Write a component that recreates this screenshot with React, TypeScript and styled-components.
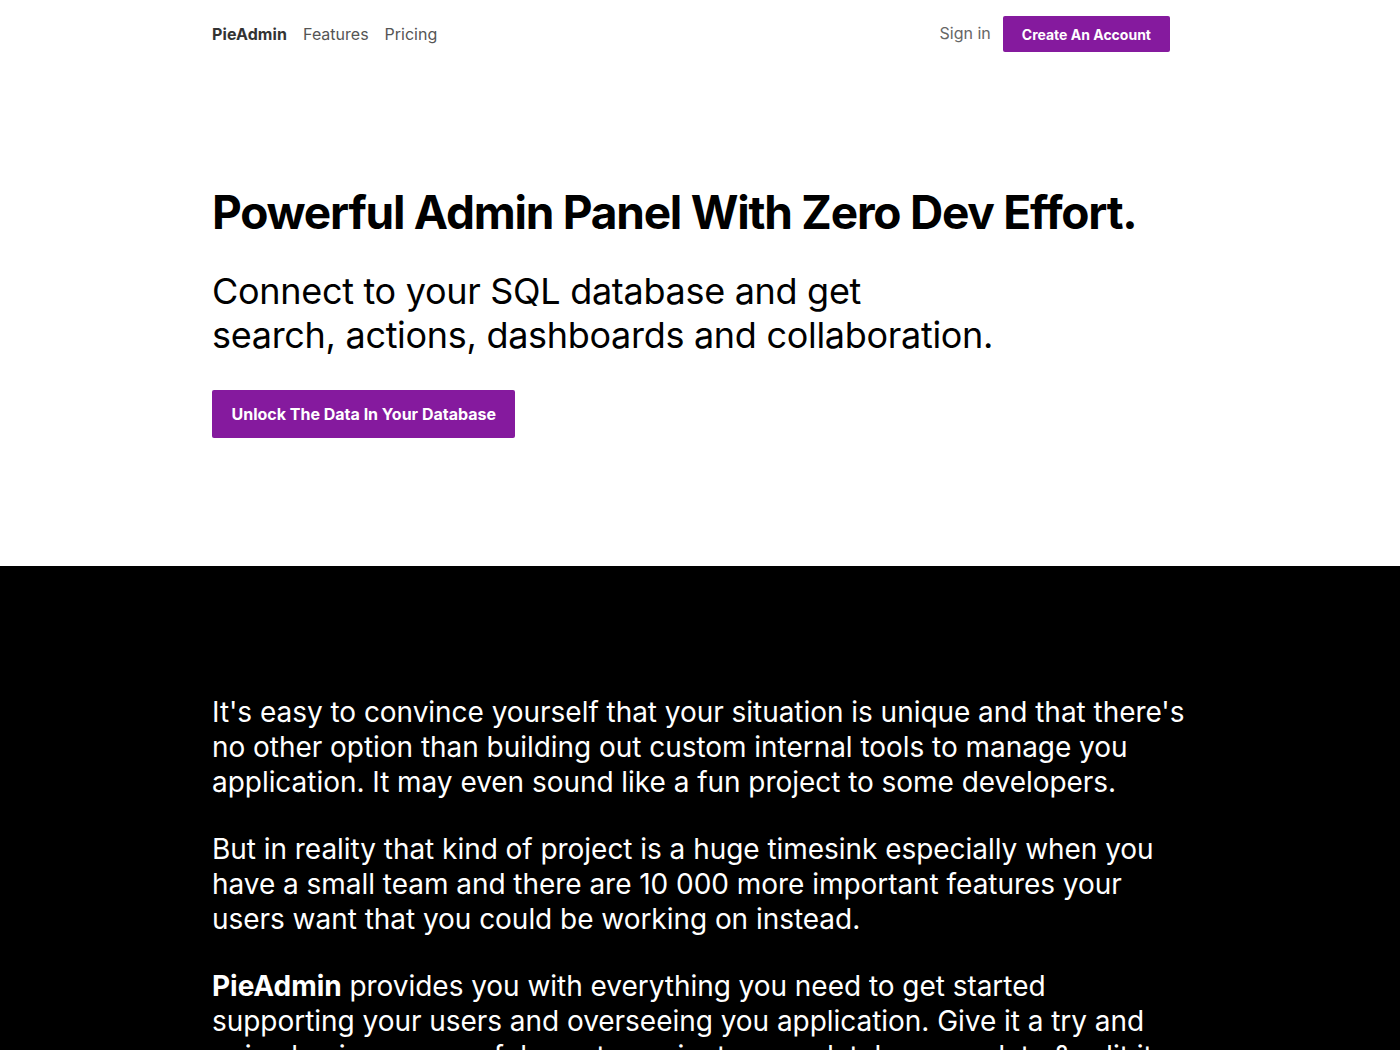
import styled, { createGlobalStyle } from "styled-components";

const GlobalStyle = createGlobalStyle`
  * { box-sizing: border-box; }
  body {
    margin: 0;
    font-family: Inter, "Noto Sans", sans-serif;
    background: #ffffff;
    color: #000000;
  }
`;

const PURPLE = "#851a9e";

export default function App() {
  return (
    <>
      <GlobalStyle />
      <Container>
        <Nav>
          <NavLeft>
            <Brand>PieAdmin</Brand>
            <NavLink>Features</NavLink>
            <NavLink>Pricing</NavLink>
          </NavLeft>
          <NavRight>
            <SignIn>Sign in</SignIn>
            <SmallButton>Create An Account</SmallButton>
          </NavRight>
        </Nav>
        <Hero>
          <Headline>Powerful Admin Panel With Zero Dev Effort.</Headline>
          <Subline>
            Connect to your SQL database and get
            <br />
            search, actions, dashboards and collaboration.
          </Subline>
          <BigButton>Unlock The Data In Your Database</BigButton>
        </Hero>
      </Container>
      <Dark>
        <Container>
          <Para>
            It's easy to convince yourself that your situation is unique and
            that there's no other option than building out custom internal
            tools to manage you application. It may even sound like a fun
            project to some developers.
          </Para>
          <Para>
            But in reality that kind of project is a huge timesink especially
            when you have a small team and there are 10 000 more important
            features your users want that you could be working on instead.
          </Para>
          <Para>
            <strong>PieAdmin</strong> provides you with everything you need to
            get started supporting your users and overseeing you application.
            Give it a try and enjoy having a powerful way to navigate your
            database, update &amp; edit it.
          </Para>
        </Container>
      </Dark>
    </>
  );
}

const Container = styled.div`
  width: 976px;
  margin: 0 auto;
`;

const Nav = styled.nav`
  height: 68px;
  display: flex;
  align-items: center;
  justify-content: space-between;
  padding-right: 18px;
`;

const NavLeft = styled.div`
  display: flex;
  align-items: center;
  gap: 16px;
`;

const Brand = styled.span`
  font-size: 16px;
  font-weight: 700;
  color: #333333;
  letter-spacing: 0.1px;
`;

const NavLink = styled.a`
  font-size: 16px;
  color: #555555;
  text-decoration: none;
`;

const NavRight = styled.div`
  display: flex;
  align-items: center;
  gap: 12px;
`;

const SignIn = styled.a`
  font-size: 16px;
  color: #666666;
  margin-top: -2px;
`;

const SmallButton = styled.button`
  height: 36px;
  padding: 0 19px;
  border: none;
  border-radius: 2px;
  background: ${PURPLE};
  color: #ffffff;
  font-family: Inter, sans-serif;
  font-size: 14px;
  font-weight: 700;
`;

const Hero = styled.section`
  padding: 116px 0 128px;
`;

const Headline = styled.h1`
  margin: 0;
  font-size: 46px;
  line-height: 56px;
  font-weight: 700;
  letter-spacing: -1.22px;
`;

const Subline = styled.p`
  margin: 29px 0 0;
  font-size: 36px;
  line-height: 44px;
  font-weight: 400;
  letter-spacing: -0.3px;
`;

const BigButton = styled.button`
  margin-top: 33px;
  height: 48px;
  padding: 0 19.5px;
  border: none;
  border-radius: 2px;
  background: ${PURPLE};
  color: #ffffff;
  font-family: Inter, sans-serif;
  font-size: 16px;
  font-weight: 700;
`;

const Dark = styled.section`
  background: #000000;
  color: #ffffff;
  padding: 129px 0 100px;
`;

const Para = styled.p`
  margin: 0 0 32px;
  font-size: 28px;
  line-height: 35px;
  font-weight: 400;
  letter-spacing: -0.04px;

  strong {
    font-weight: 700;
  }
`;
